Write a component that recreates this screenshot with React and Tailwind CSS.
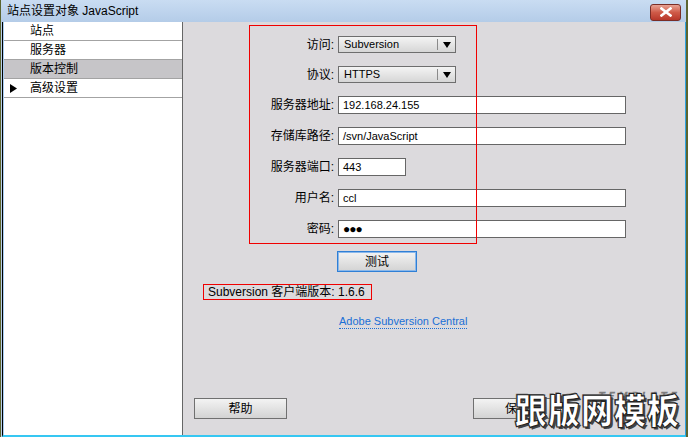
import React from "react";

const F = { fontFamily: "'Liberation Sans','Noto Sans CJK SC',sans-serif" };

function Select({ value }) {
  return (
    <div className="flex h-[17px] w-[118px] items-stretch border border-[#6e6e6e] bg-gradient-to-b from-[#f4f4f4] to-[#d6d6d6] text-[11px] leading-none text-black">
      <div className="flex flex-1 items-center pl-[5px]">{value}</div>
      <div className="my-[2px] w-px bg-[#8a8a8a]" />
      <div className="flex w-[17px] items-center justify-center">
        <svg width="8" height="6" viewBox="0 0 8 6"><path d="M0 0h8L4 6z" fill="#000" /></svg>
      </div>
    </div>
  );
}

function Input({ value, w = "w-[288px]", h = "h-[18px]" }) {
  return (
    <div className={`flex ${w} ${h} items-center border border-[#666] bg-white pl-[4px] text-[11px] leading-none text-black`}>
      {value}
    </div>
  );
}

function Btn({ children, w, focus }) {
  return (
    <div
      className={`flex h-[21px] ${w} items-center justify-center border bg-gradient-to-b from-[#f3f3f3] to-[#d3d3d3] text-[12px] leading-none text-black ${
        focus ? "border-[#2f7fd6] ring-1 ring-inset ring-[#8bb8ea]" : "border-[#707070]"
      }`}
    >
      {children}
    </div>
  );
}

export default function App() {
  const rows = [
    { label: "访问:", el: <Select value="Subversion" /> },
    { label: "协议:", el: <Select value="HTTPS" /> },
    { label: "服务器地址:", el: <Input value="192.168.24.155" /> },
    { label: "存储库路径:", el: <Input value="/svn/JavaScript" /> },
    { label: "服务器端口:", el: <Input value="443" w="w-[68px]" /> },
    { label: "用户名:", el: <Input value="ccl" /> },
    {
      label: "密码:",
      el: <Input value={<span className="text-[12px] font-bold tracking-[-1px]">●●●</span>} />,
    },
  ];
  const nav = ["站点", "服务器", "版本控制", "高级设置"];
  return (
    <div className="relative flex h-[437px] w-[688px] flex-col overflow-hidden bg-[#b9d0ea] border-l border-r-2 border-[#5b6530]" style={F}>
      {/* title bar */}
      <div className="flex h-[22px] shrink-0 items-center justify-between bg-gradient-to-b from-[#c9dcf2] to-[#b4cce8] pl-[6px] pr-[5px]">
        <span className="text-[12px] leading-none text-black">站点设置对象 JavaScript</span>
        <div className="mt-[2px] flex h-[17px] w-[31px] items-center justify-center rounded-[3px] border border-[#7a2d26] bg-gradient-to-b from-[#e7a193] via-[#cf5a48] to-[#b8372a]">
          <svg width="12" height="10" viewBox="0 0 12 10">
            <path d="M1.5 1.5l9 7M10.5 1.5l-9 7" stroke="#fff" strokeWidth="2.6" strokeLinecap="square" />
          </svg>
        </div>
      </div>
      {/* body */}
      <div className="ml-px flex flex-1 border-b-2 border-l border-r border-b-[#36c7f2] border-l-black border-r-[#2ea3e3]">
        {/* left nav */}
        <div className="w-[180px] shrink-0 border-l border-r border-l-[#a9cdf0] border-r-[#666] bg-white">
          {nav.map((n, i) => (
            <div
              key={n}
              className={`relative flex h-[19px] items-center border-b border-[#a3a3a3] pl-[26px] text-[12px] leading-none text-black ${
                i === 2 ? "bg-[#c6c5c8]" : ""
              }`}
            >
              {i === 3 && (
                <svg className="absolute left-[6px] top-[5px]" width="7" height="9" viewBox="0 0 7 9">
                  <path d="M0 0l7 4.5L0 9z" fill="#000" />
                </svg>
              )}
              {n}
            </div>
          ))}
        </div>
        {/* right content */}
        <div className="relative flex flex-1 flex-col bg-[#dcdadd] pb-[16px] text-black">
          <div className="mt-[14px] grid grid-cols-[151px_auto] gap-x-[4px] gap-y-[13px]">
            {rows.map((r) => (
              <React.Fragment key={r.label}>
                <div className="flex items-center justify-end text-[12px] leading-none">{r.label}</div>
                <div className="flex">{r.el}</div>
              </React.Fragment>
            ))}
          </div>
          <div className="ml-[154px] mt-[13px]">
            <Btn w="w-[80px]" focus>测试</Btn>
          </div>
          <div className="ml-[20px] mt-[12px] flex">
            <div className="flex h-[16px] w-[169px] items-center whitespace-nowrap border border-[#f00000] pl-[4px] text-[12px] leading-none">
              Subversion 客户端版本: 1.6.6
            </div>
          </div>
          <div className="ml-[156px] mt-[16px] flex">
            <span className="border-b border-dotted border-[#1a6fd6] pb-[1px] text-[11px] leading-none text-[#1a6fd6]">
              Adobe Subversion Central
            </span>
          </div>
          <div className="mt-auto flex items-center pl-[11px]">
            <Btn w="w-[93px]">帮助</Btn>
            <div className="ml-[186px]">
              <Btn w="w-[88px]">保存</Btn>
            </div>
          </div>
          {/* red annotation box */}
          <div className="pointer-events-none absolute left-[66px] top-[3px] h-[219px] w-[228px] border border-[#f00000]" />
        </div>
      </div>
      {/* watermark */}
      <div className="pointer-events-none absolute left-[514px] top-[389px] h-[44px] w-[170px]">
        <span
          className="absolute right-[6px] top-[1px] text-[11px] font-black italic leading-none tracking-[3px] text-[#555] opacity-70"
          style={{ fontFamily: "'Noto Sans CJK SC',sans-serif" }}
        >
          TEMPLATE
        </span>
        <span
          className="absolute left-0 top-[2px] origin-top scale-y-[1.1] text-[32px] font-black leading-none tracking-[1px] text-white"
          style={{
            fontFamily: "'Noto Sans CJK SC',sans-serif",
            WebkitTextStroke: "1px #222",
            textShadow: "2px 2px 0 #444, -1px -1px 0 #666",
          }}
        >
          跟版网模板
        </span>
      </div>
    </div>
  );
}
